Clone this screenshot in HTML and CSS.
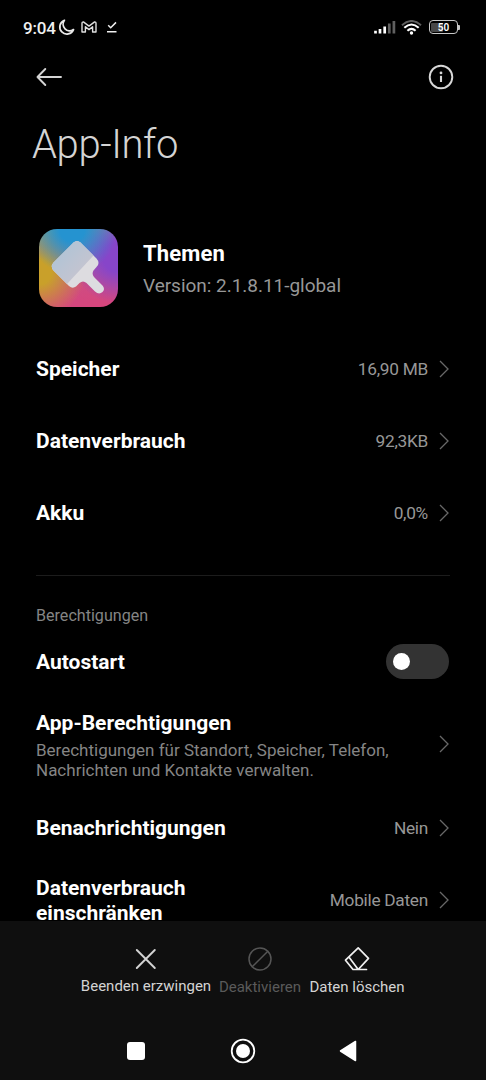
FILE: index.html
```html
<!DOCTYPE html>
<html lang="de">
<head>
<meta charset="utf-8">
<title>App-Info</title>
<link rel="stylesheet" href="styles.css">
</head>
<body>
<div class="screen">
  <header class="status">
    <span class="clock">9:04</span>
    <svg class="moon" width="17" height="17" viewBox="0 0 17 17"><path d="M6.400 1.300A7.100 7.100 0 1 0 15.500 10.600 6.600 6.600 0 0 1 6.400 1.300Z" fill="none" stroke="#e8e8e8" stroke-width="1.800" stroke-linejoin="round"/></svg>
    <svg class="mail" width="16" height="12" viewBox="0 0 16 12"><path d="M1 11V2.200Q1 .8 2.400 .9L8 5.100 13.600 .9Q15 .8 15 2.200V11H11.600V5.800L8 8.600 4.400 5.800V11Z" fill="none" stroke="#e0e0e0" stroke-width="1.400" stroke-linejoin="round"/></svg>
    <svg class="done" width="12" height="12" viewBox="0 0 12 12"><path d="M2.200 4.300 4.700 6.800 10 1.400M1 10.800H10.500" fill="none" stroke="#f0f0f0" stroke-width="1.500"/></svg>
    <span class="spacer"></span>
    <svg class="signal" width="22" height="14" viewBox="0 0 22 14"><path d="M1.500 10.700V13.500M6 9V13.500M10.700 6.500V13.500" stroke="#fff" stroke-width="2.700"/><path d="M15.300 3.500V13.500M19.900 1V13.500" stroke="#606060" stroke-width="2.700"/></svg>
    <svg class="wifi" width="21" height="15" viewBox="0 0 21 15"><path d="M1 5.200Q10.500-3.200 20 5.200" stroke="#606060" stroke-width="2" fill="none"/><path d="M3.300 7.800Q10.500 1.200 17.700 7.800M6.400 10.700Q10.500 7 14.600 10.700" stroke="#fff" stroke-width="2.100" fill="none"/><circle cx="10.500" cy="13" r="1.700" fill="#fff"/></svg>
    <span class="battery"><span class="charge"></span><span class="percent">50</span></span><span class="pole"></span>
  </header>

  <nav class="topbar">
    <svg width="27" height="20" viewBox="0 0 27 20"><path d="M1.500 10H25M9.300 2 1.500 10 9.300 18" fill="none" stroke="#d4d4d4" stroke-width="1.900" stroke-linecap="round" stroke-linejoin="round"/></svg>
    <svg width="26" height="26" viewBox="0 0 26 26"><circle cx="13" cy="13" r="11.300" fill="none" stroke="#d8d8d8" stroke-width="1.900"/><circle cx="13" cy="8.900" r="1.400" fill="#d8d8d8"/><path d="M13 11.800V18" stroke="#d8d8d8" stroke-width="2.100"/></svg>
  </nav>
  <h1 class="title">App-Info</h1>

  <section class="app">
    <div class="app-icon">
      <svg width="78" height="78" viewBox="0 0 78 78">
        <defs><linearGradient id="brush" x1="0" y1="0" x2="1" y2="1"><stop offset="0" stop-color="#a9c4d8"/><stop offset="1" stop-color="#cfc4cd"/></linearGradient></defs>
        <path d="M34.500 13.500Q38 10.500 41.500 13.500L57.500 29.500Q61.500 34 57.500 38L54.500 41.500Q52.500 45 55 48L63.500 56.500Q66.500 60 63.500 63 60 66 56 62.500L47.500 54Q44 51 40.500 54L37 57.500Q33.500 60 30 57L14.500 41.500Q11 37.500 14.500 33.500Z" fill="#dddce0"/>
        <path d="M34.500 13.500Q38 10.500 41.500 13.500L54.500 26.500L28 55L14.500 41.500Q11 37.500 14.500 33.500Z" fill="url(#brush)"/>
      </svg>
    </div>
    <div class="app-text">
      <div class="app-name">Themen</div>
      <div class="app-version">Version: 2.1.8.11-global</div>
    </div>
  </section>

  <main class="list">
    <div class="row"><span class="label">Speicher</span><span class="value">16,90 MB</span><svg class="chevron" viewBox="0 0 10 18"><path d="M1 1 9 9 1 17"/></svg></div>
    <div class="row"><span class="label">Datenverbrauch</span><span class="value">92,3KB</span><svg class="chevron" viewBox="0 0 10 18"><path d="M1 1 9 9 1 17"/></svg></div>
    <div class="row"><span class="label">Akku</span><span class="value">0,0%</span><svg class="chevron" viewBox="0 0 10 18"><path d="M1 1 9 9 1 17"/></svg></div>
    <div class="divider"></div>
    <h2 class="group">Berechtigungen</h2>
    <div class="row autostart"><span class="label">Autostart</span><span class="toggle"><span class="knob"></span></span></div>
    <div class="row detail">
      <div class="detail-text"><span class="label">App-Berechtigungen</span><span class="note">Berechtigungen für Standort, Speicher, Telefon,<br>Nachrichten und Kontakte verwalten.</span></div>
      <svg class="chevron" viewBox="0 0 10 18"><path d="M1 1 9 9 1 17"/></svg>
    </div>
    <div class="row"><span class="label">Benachrichtigungen</span><span class="value">Nein</span><svg class="chevron" viewBox="0 0 10 18"><path d="M1 1 9 9 1 17"/></svg></div>
    <div class="row"><span class="label">Datenverbrauch<br>einschränken</span><span class="value">Mobile Daten</span><svg class="chevron" viewBox="0 0 10 18"><path d="M1 1 9 9 1 17"/></svg></div>
  </main>

  <footer class="bottom">
    <div class="actions">
      <div class="action stop"><svg width="26" height="26" viewBox="0 0 26 26"><path d="M3.800 4 21.800 22M21.800 4 3.800 22" stroke-width="1.900"/></svg><span>Beenden erzwingen</span></div>
      <div class="action off"><svg width="26" height="26" viewBox="0 0 26 26"><circle cx="13" cy="13" r="11" stroke-width="1.500"/><path d="M5.200 20.800 20.800 5.200" stroke-width="1.500"/></svg><span>Deaktivieren</span></div>
      <div class="action clear"><svg width="26" height="26" viewBox="0 0 26 26"><path d="M14.200 1.800 24.500 12.300 14.200 23.500H9L1.500 14.200ZM4.900 11 14.200 23.500H22.500" stroke-width="1.700"/></svg><span>Daten löschen</span></div>
    </div>
    <div class="system">
      <svg width="20" height="20" viewBox="0 0 20 20"><rect x="1" y="1" width="18" height="18" rx="3" fill="#fff"/></svg>
      <svg width="26" height="26" viewBox="0 0 26 26"><circle cx="13" cy="13" r="11.300" fill="none" stroke="#fff" stroke-width="1.800"/><circle cx="13" cy="13" r="7" fill="#fff"/></svg>
      <svg width="18" height="22" viewBox="0 0 18 22"><path d="M1.500 11 16.500 1.500V20.500Z" fill="#fff" stroke="#fff" stroke-width="1.500" stroke-linejoin="round"/></svg>
    </div>
  </footer>
</div>
</body>
</html>
```
FILE: styles.css
```css
* { box-sizing: border-box; }
body { margin: 0; background: #000; color: #fff; font-family: Roboto, sans-serif; }
svg { display: block; flex: none; }
.screen { width: 486px; height: 1080px; overflow: hidden; display: flex; flex-direction: column; background: #000; }

.status { height: 54px; flex: none; display: flex; align-items: center; padding: 0 26px 0 23px; }
.clock { font-size: 17px; font-weight: 500; line-height: 20px; width: 35px; letter-spacing: -0.2px; white-space: nowrap; color: #f0f0f0; padding-top: 2px; }
.mail { margin-left: 6px; }
.done { margin-left: 9px; }
.spacer { flex: 1; }
.wifi { margin-left: 5px; }
.battery { width: 29px; height: 14px; margin-left: 7px; border: 1.5px solid #c8c8c8; border-radius: 4px; display: grid; align-items: center; justify-items: center; }
.charge, .percent { grid-area: 1 / 1; }
.charge { justify-self: start; width: 12px; height: 9px; margin-left: 1px; background: #484848; border-radius: 1px; }
.percent { font-size: 10px; line-height: 12px; padding-top: 1px; font-weight: 600; }
.pole { width: 2px; height: 5px; background: #c8c8c8; border-radius: 0 1px 1px 0; }

.topbar { height: 45px; flex: none; display: flex; align-items: center; justify-content: space-between; padding: 0 32px 0 36px; }
.title { margin: 22px 0 0 32px; height: 48px; flex: none; font-size: 40px; line-height: 48px; font-weight: 300; letter-spacing: -0.4px; color: #d4d4d4; white-space: nowrap; }

.app { height: 78px; flex: none; margin: 60px 0 0 39px; display: flex; align-items: center; }
.app-icon { width: 79px; height: 78px; border-radius: 18px; background:
  radial-gradient(circle at 42% 0%, #2593d0 0, #2593d0 14%, transparent 50%),
  radial-gradient(circle at 100% 36%, #8745c9 0, #8745c9 16%, transparent 50%),
  radial-gradient(circle at 0% 55%, #c9a02a 0, #c9a02a 14%, transparent 52%),
  linear-gradient(170deg, #8aa878 0%, #9d62b0 35%, #cf4c82 68%, #d8447c 100%); }
.app-text { margin: 2px 0 0 25px; white-space: nowrap; }
.app-name { font-size: 22px; line-height: 28px; font-weight: 700; letter-spacing: 0.15px; }
.app-version { font-size: 19px; line-height: 24px; letter-spacing: -0.03px; margin-top: 6px; color: #979797; }

.list { flex: 1; min-height: 0; overflow: hidden; padding: 26px 36px 0 36px; }
.row { height: 72px; display: flex; align-items: center; }
.label { flex: 1; font-size: 21px; line-height: 25px; font-weight: 700; white-space: nowrap; padding-top: 1px; }
.value { font-size: 17.3px; line-height: 22px; letter-spacing: -0.28px; color: #979797; white-space: nowrap; }
.chevron { width: 10px; height: 18px; margin: 0 1px 0 11px; fill: none; stroke: #686868; stroke-width: 1.3; }
.divider { height: 1px; margin-top: 26px; background: #1c1c1c; }
.group { margin: 30px 0 0; font-size: 16.1px; line-height: 20px; font-weight: 400; color: #858585; }
.autostart { height: 70px; }
.autostart .label { padding-top: 3px; }
.toggle { width: 63px; height: 35px; margin-right: 1px; padding-left: 7px; border-radius: 18px; background: #333; display: flex; align-items: center; }
.knob { width: 17px; height: 17px; border-radius: 50%; background: #fff; }
.detail { height: 96px; justify-content: space-between; }
.detail-text { display: flex; flex-direction: column; padding-top: 1px; }
.detail-text .label { flex: none; }
.note { margin-top: 4px; font-size: 17px; line-height: 20px; color: #858585; white-space: nowrap; }

.bottom { height: 159px; flex: none; background: #0f0f0f; }
.actions { display: flex; padding: 25px 0 0 81px; height: 100px; }
.action { display: flex; flex-direction: column; align-items: center; font-size: 15px; line-height: 18px; color: #d4d4d4; white-space: nowrap; }
.action svg { fill: none; stroke: #d4d4d4; stroke-linecap: round; stroke-linejoin: round; }
.action span { margin-top: 6px; }
.stop { width: 130px; }
.action.stop span { margin-top: 5px; }
.off { width: 98px; color: #5a5a5a; }
.off svg { stroke: #555; }
.clear { width: 96px; }
.clear svg { stroke: #f0f0f0; }
.system { height: 60px; display: flex; align-items: center; justify-content: space-between; padding: 0 129px 0 126px; }
```
